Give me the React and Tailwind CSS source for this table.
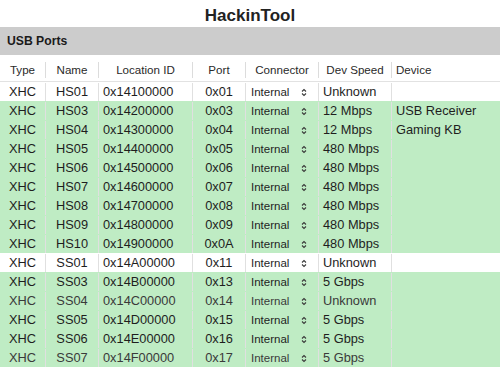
// HackinTool USB ports table
const rows = [
  { name: "HS01", loc: "0x14100000", port: "0x01", speed: "Unknown", device: "", on: false },
  { name: "HS03", loc: "0x14200000", port: "0x03", speed: "12 Mbps", device: "USB Receiver", on: true },
  { name: "HS04", loc: "0x14300000", port: "0x04", speed: "12 Mbps", device: "Gaming KB", on: true },
  { name: "HS05", loc: "0x14400000", port: "0x05", speed: "480 Mbps", device: "", on: true },
  { name: "HS06", loc: "0x14500000", port: "0x06", speed: "480 Mbps", device: "", on: true },
  { name: "HS07", loc: "0x14600000", port: "0x07", speed: "480 Mbps", device: "", on: true },
  { name: "HS08", loc: "0x14700000", port: "0x08", speed: "480 Mbps", device: "", on: true },
  { name: "HS09", loc: "0x14800000", port: "0x09", speed: "480 Mbps", device: "", on: true },
  { name: "HS10", loc: "0x14900000", port: "0x0A", speed: "480 Mbps", device: "", on: true },
  { name: "SS01", loc: "0x14A00000", port: "0x11", speed: "Unknown", device: "", on: false },
  { name: "SS03", loc: "0x14B00000", port: "0x13", speed: "5 Gbps", device: "", on: true },
  { name: "SS04", loc: "0x14C00000", port: "0x14", speed: "Unknown", device: "", on: true, dim: true },
  { name: "SS05", loc: "0x14D00000", port: "0x15", speed: "5 Gbps", device: "", on: true },
  { name: "SS06", loc: "0x14E00000", port: "0x16", speed: "5 Gbps", device: "", on: true },
  { name: "SS07", loc: "0x14F00000", port: "0x17", speed: "5 Gbps", device: "", on: true, dim: true },
];

function Chevrons() {
  return (
    <svg width="6" height="9" viewBox="0 0 6 9" className="shrink-0">
      <path d="M1 3.5 L3 1.5 L5 3.5 M1 5.5 L3 7.5 L5 5.5" fill="none" stroke="#3a3a3a" strokeWidth="1.1" />
    </svg>
  );
}

function HeadSep() {
  return <div className="w-px h-[16px] bg-[#dcdcdc] shrink-0" />;
}

export default function App() {
  return (
    <div className="w-[500px] h-[369px] overflow-hidden bg-white text-[#1e1e1e]" style={{ fontFamily: '"Liberation Sans", Arial, sans-serif' }}>
      <div className="h-[27px] flex items-center justify-center pt-[4px]">
        <h1 className="text-[17px] font-bold text-[#222]">HackinTool</h1>
      </div>
      <div className="h-[28px] bg-[#cccccc] flex items-center pl-[7px] pt-[1px]">
        <span className="text-[12.2px] font-bold text-[#1a1a1a]">USB Ports</span>
      </div>

      {/* column headers */}
      <div className="h-[27px] flex items-center pt-[3px] text-[11.6px] text-[#2a2a2a] border-b border-[#e2e2e2]">
        <div className="w-[45px] text-center">Type</div>
        <HeadSep />
        <div className="w-[52px] text-center">Name</div>
        <HeadSep />
        <div className="w-[93px] text-center">Location ID</div>
        <HeadSep />
        <div className="w-[52px] text-center">Port</div>
        <HeadSep />
        <div className="w-[72px] text-center">Connector</div>
        <HeadSep />
        <div className="w-[72px] text-center">Dev Speed</div>
        <HeadSep />
        <div className="flex-1 pl-[4px]">Device</div>
      </div>

      <div>
        {rows.map((r) => (
          <div
            key={r.name}
            className={`h-[19px] flex items-stretch pt-[1px] text-[12.8px] ${r.on ? "bg-[#bfecc4]" : "bg-white"} ${r.dim ? "text-[#3a3a3a]" : "text-[#1e1e1e]"}`}
          >
            <div className="w-[46px] border-r border-[#e0e0e0] flex items-center justify-center">XHC</div>
            <div className="w-[53px] border-r border-[#e0e0e0] flex items-center justify-center">{r.name}</div>
            <div className="w-[94px] border-r border-[#e0e0e0] flex items-center pl-[4px]">{r.loc}</div>
            <div className="w-[53px] border-r border-[#e0e0e0] flex items-center justify-center">{r.port}</div>
            <div className="w-[73px] border-r border-[#e0e0e0] flex items-center pl-[5px] pr-[11px] justify-between">
              <span className="text-[11.5px] pt-[2px]">Internal</span>
              <Chevrons />
            </div>
            <div className="w-[73px] border-r border-[#e0e0e0] flex items-center pl-[4px]">{r.speed}</div>
            <div className="flex-1 flex items-center pl-[4px]">{r.device}</div>
          </div>
        ))}
      </div>
    </div>
  );
}
